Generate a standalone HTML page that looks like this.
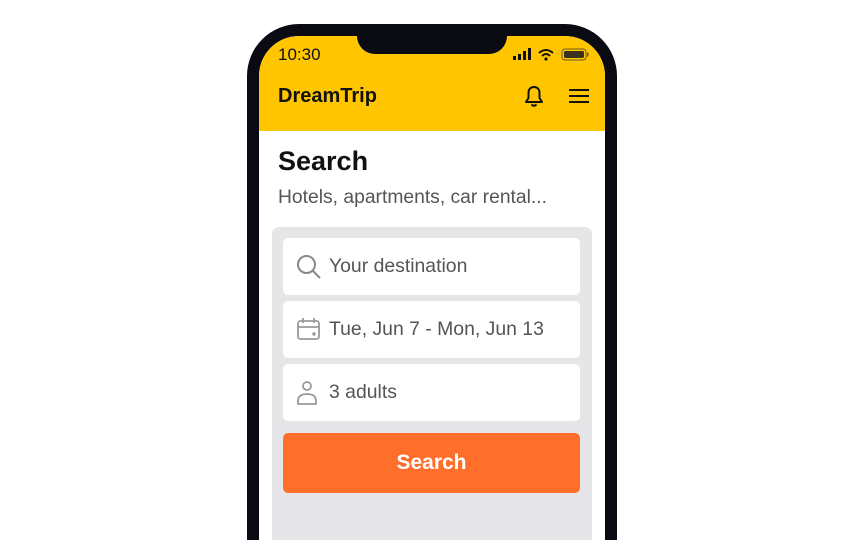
<!DOCTYPE html>
<html><head><style>
*{margin:0;padding:0;box-sizing:border-box}
html,body{width:864px;height:540px;overflow:hidden}
body{background:#fff;position:relative;font-family:"Liberation Sans",sans-serif}
.phone{position:absolute;left:247px;top:24px;width:370px;height:516px;background:#0a0a12;border-radius:52px 52px 0 0}
.screen{position:absolute;left:259px;top:36px;width:346px;height:504px;background:#fff;border-radius:40px 40px 0 0;overflow:hidden}
.hdr{position:absolute;left:0;top:0;width:346px;height:95px;background:#ffc600}
.notch{position:absolute;left:98px;top:0;width:150px;height:18px;background:#0a0a12;border-radius:0 0 18px 18px}
.time{position:absolute;left:19px;top:9px;font-size:17px;color:#111}
.brand{position:absolute;left:19px;top:49px;font-size:20px;font-weight:bold;color:#111}
.t{position:absolute;left:19px;top:110px;font-size:27px;font-weight:bold;color:#111}
.sub{position:absolute;left:19px;top:151px;font-size:19.3px;color:#555}
.panel{position:absolute;left:13px;top:191px;width:320px;height:313px;background:#e6e6e8;border-radius:7px 7px 0 0}
.card{position:absolute;left:11px;width:297px;height:57px;background:#fff;border-radius:5px;font-size:19.4px;color:#555}
.card span{position:absolute;left:46px;top:17px}
.card svg{position:absolute;left:13px;top:16px}
.btn{position:absolute;left:11px;top:206px;width:297px;height:60px;background:#ff6e2a;border-radius:5px;color:#fff;font-weight:bold;font-size:21px;text-align:center;line-height:60px}
</style></head><body>
<div class="phone"></div>
<div class="screen">
<div class="hdr">
<div class="time">10:30</div>
<svg style="position:absolute;left:254px;top:12px" width="84" height="14">
<rect x="0" y="8" width="3" height="4" fill="#111"/><rect x="5" y="6" width="3" height="6" fill="#111"/><rect x="10" y="3" width="3" height="9" fill="#111"/><rect x="15" y="0" width="3" height="12" fill="#111"/>
<path d="M26 5 Q33 -1 40 5" stroke="#111" stroke-width="2" fill="none"/><path d="M29 8 Q33 4 37 8" stroke="#111" stroke-width="2" fill="none"/><circle cx="33" cy="11" r="1.6" fill="#111"/>
<rect x="49" y="1" width="24" height="11" rx="3" fill="none" stroke="#6a5a1a" stroke-width="1"/><rect x="51" y="3" width="20" height="7" rx="1.5" fill="#3a3220"/><rect x="74" y="4.5" width="1.5" height="4" fill="#6a5a1a"/>
</svg>
<div class="brand">DreamTrip</div>
<svg style="position:absolute;left:265px;top:49px" width="20" height="22" viewBox="0 0 20 22" fill="none" stroke="#111" stroke-width="2" stroke-linejoin="round">
<path d="M10 2 C6 2 4.5 5 4.5 8 V13 L2 17 H18 L15.5 13 V8 C15.5 5 14 2 10 2Z"/><path d="M7.5 19.5 Q10 22 12.5 19.5"/></svg>
<svg style="position:absolute;left:309px;top:52px" width="22" height="16" stroke="#111" stroke-width="2"><path d="M1 2H21M1 8H21M1 14H21"/></svg>
</div>
<div class="notch"></div>
<div class="t">Search</div>
<div class="sub">Hotels, apartments, car rental...</div>
<div class="panel">
<div class="card" style="top:11px"><svg width="26" height="26" fill="none" stroke="#888" stroke-width="2"><circle cx="10.5" cy="10.5" r="8.5"/><path d="M17 17L24 24"/></svg><span>Your destination</span></div>
<div class="card" style="top:74px"><svg width="26" height="26" fill="none" stroke="#999" stroke-width="1.8"><rect x="2" y="4" width="21" height="18" rx="2.5"/><path d="M2 10H23M7 1V6M18 1V6"/><circle cx="18" cy="17" r="0.8" fill="#999"/></svg><span>Tue, Jun 7 - Mon, Jun 13</span></div>
<div class="card" style="top:137px"><svg width="26" height="26" fill="none" stroke="#999" stroke-width="1.8"><circle cx="11" cy="6" r="4"/><path d="M2 24V21Q2 14 11 14Q20 14 20 21V24Z"/></svg><span>3 adults</span></div>
<div class="btn">Search</div>
</div>
</div>
</body></html>
